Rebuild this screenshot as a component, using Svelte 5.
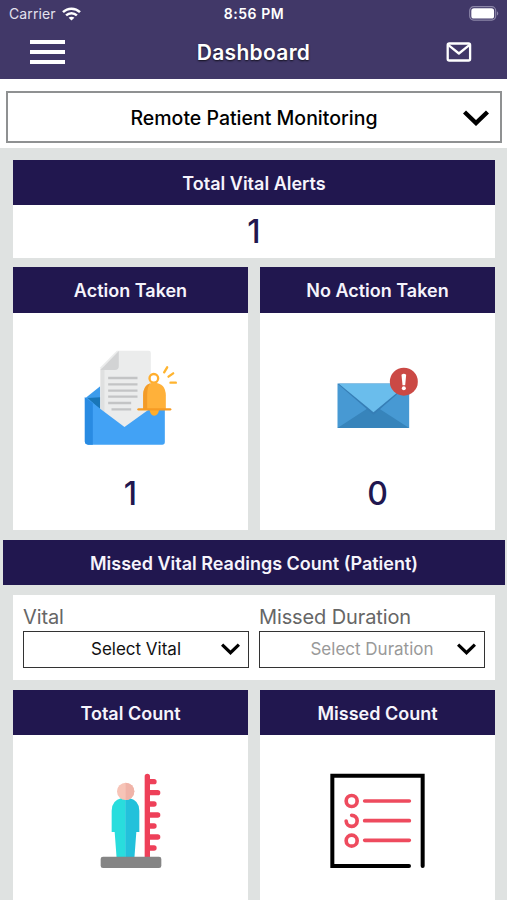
<script lang="ts">
  let program = $state('Remote Patient Monitoring');
  let vital = $state('Select Vital');
  let duration = $state('Select Duration');

  const totals = { alerts: 1, taken: 1, notTaken: 0 };
</script>

{#snippet chevron()}
  <svg class="chevron" viewBox="0 0 26 16" fill="none" stroke="currentColor" stroke-width="4.4">
    <path d="M1.5 2 L13 13 L24.5 2" />
  </svg>
{/snippet}

<div class="app">
  <header class="header">
    <div class="status">
      <div class="status__carrier">
        <span>Carrier</span>
        <svg width="19" height="14" viewBox="0 0 19 14" fill="none" stroke="#fff" stroke-width="2.5">
          <path d="M1 5.2 C5.7 0.6 13.3 0.6 18 5.2" />
          <path d="M4.1 8.4 C7.2 5.5 11.8 5.5 14.9 8.4" />
          <path d="M9.5 13.6 L6.6 10.7 C8.2 9.3 10.8 9.3 12.4 10.7 Z" fill="#fff" stroke="none" />
        </svg>
      </div>
      <span class="status__time">8:56 PM</span>
      <svg class="status__battery" width="30" height="15" viewBox="0 0 30 15">
        <rect x="0.7" y="0.7" width="26" height="13.4" rx="4" fill="none" stroke="#8c86a8" stroke-width="1.2" />
        <rect x="2.3" y="2.3" width="22.8" height="10.2" rx="2.6" fill="#fff" />
        <path d="M28 5.2 C29.7 6 29.7 8.8 28 9.6 Z" fill="#8c86a8" />
      </svg>
    </div>
    <nav class="nav">
      <button class="nav__menu" aria-label="Menu">
        <span></span>
        <span></span>
        <span></span>
      </button>
      <h1 class="nav__title">Dashboard</h1>
      <button class="nav__mail" aria-label="Messages">
        <svg width="26" height="20" viewBox="0 0 26 20" fill="none" stroke="#fff" stroke-width="2.3" stroke-linejoin="round">
          <rect x="1.7" y="1.5" width="22.4" height="17" rx="1.6" />
          <path d="M2.5 3.2 L12.9 11.5 L23.3 3.2" />
        </svg>
      </button>
    </nav>
  </header>

  <div class="program">
    <button class="select select--program">
      <span>{program}</span>
      {@render chevron()}
    </button>
  </div>

  <main class="content">
    <section class="card card--total">
      <h2 class="card__title">Total Vital Alerts</h2>
      <div class="card__total">{totals.alerts}</div>
    </section>

    <div class="row">
      <section class="card card--tall">
        <h2 class="card__title">Action Taken</h2>
        <svg class="card__icon" viewBox="2.5 0 360 360">
          <path d="M45 175 L90 139 V250 H45 Z" fill="#3d9cec" />
          <path d="M52 174 L90 172 V207 Z" fill="#1976b8" />
          <path d="M91 82 L140 32 H236 Q242 32 242 39 V215 L165 264 L91 209 Z" fill="#ebecec" />
          <path d="M91 87 L103 80 V218 L91 209 Z" fill="#dfe0e0" />
          <path d="M91 90 L146 33 V78 Q146 90 134 90 Z" fill="#d2d3d4" />
          <g stroke="#c3c4c5" stroke-width="7">
            <path d="M114 114 H202 M114 133 H202 M114 152 H202 M114 170 H202 M114 189 H183 M124 208 H183" />
          </g>
          <path d="M44 172 L163 261 L284 174 V306 Q284 314 276 314 H54 Q44 314 44 304 Z" fill="#42a2f5" />
          <path d="M44 172 L68 190 V314 H54 Q44 314 44 304 Z" fill="#298be2" />
          <circle cx="251" cy="115" r="13" fill="none" stroke="#ffae2e" stroke-width="7" />
          <path d="M238 206 H267 Q265 227 252 227 Q240 227 238 206 Z" fill="#ffad2b" />
          <path d="M219 207 V166 Q219 129 252 128 Q286 129 287 166 V207 Z" fill="#ffb13a" />
          <path d="M219 207 V166 Q219 137 241 130 Q231 140 231 166 V207 Z" fill="#f29b28" />
          <path d="M205 208 H300" stroke="#f69b24" stroke-width="7" stroke-linecap="round" />
          <path d="M282 97 L291 82 M295 110 L309 100 M301 128 H317" stroke="#ffb42f" stroke-width="7" stroke-linecap="round" />
        </svg>
        <div class="card__count">{totals.taken}</div>
      </section>
      <section class="card card--tall">
        <h2 class="card__title">No Action Taken</h2>
        <svg class="card__icon" viewBox="-5.5 -30 360 360">
          <rect x="53" y="101" width="215" height="133" fill="#4799d3" />
          <path d="M53 234 L145 174 H175 L268 234 Z" fill="#3784bb" />
          <path d="M53 101 H268 L161 194 Z" fill="#367eb6" />
          <path d="M57 101 H264 L161 187 Z" fill="#6abdec" />
          <circle cx="252" cy="95" r="42" fill="#cb4945" />
          <path d="M245 74 Q252 69 259 74 L256 106 H248 Z" fill="#fff" />
          <circle cx="252" cy="115" r="6" fill="#fff" />
        </svg>
        <div class="card__count">{totals.notTaken}</div>
      </section>
    </div>

    <h2 class="banner">Missed Vital Readings Count (Patient)</h2>

    <div class="filters">
      <div class="field">
        <span class="field__label">Vital</span>
        <button class="select">
          <span>{vital}</span>
          {@render chevron()}
        </button>
      </div>
      <div class="field">
        <span class="field__label">Missed Duration</span>
        <button class="select select--empty">
          <span>{duration}</span>
          {@render chevron()}
        </button>
      </div>
    </div>

    <div class="row">
      <section class="card card--count">
        <h2 class="card__title">Total Count</h2>
        <svg class="card__icon" viewBox="-28 0 360 360">
          <path d="M201 49 V296 M201 65 H221 M201 98 H232 M201 132 H221 M201 165 H232 M201 198 H221 M201 231 H232 M201 264 H221" fill="none" stroke="#ee4059" stroke-width="16" stroke-linecap="round" />
          <path d="M136 114 H124 Q94 121 94 152 V216 H103 L109 296 H136 Z" fill="#29dddd" />
          <path d="M135 114 H147 Q177 121 177 152 V216 H168 L162 296 H135 Z" fill="#23c1db" />
          <circle cx="136" cy="94" r="26" fill="#f7c4b7" />
          <path d="M136 68 A26 26 0 0 1 136 120 Z" fill="#f0b3a8" />
          <rect x="61" y="290" width="182" height="34" rx="7" fill="#858585" />
        </svg>
      </section>
      <section class="card card--count">
        <h2 class="card__title">Missed Count</h2>
        <svg class="card__icon" viewBox="24 0 360 360" fill="none" stroke-linecap="round">
          <path d="M297 318 H67 V47 H338 V318" stroke="#000" stroke-width="12" />
          <g stroke="#ee4b5e" stroke-width="11">
            <circle cx="125" cy="123" r="16.5" />
            <path d="M125 166 A16.5 16.5 0 1 1 108.5 183" />
            <circle cx="125" cy="242" r="16.5" />
            <path d="M164 123 H298 M164 182 H298 M164 241 H298" />
          </g>
        </svg>
      </section>
    </div>
  </main>
</div>

<style>
  :global(body) {
    background: #dfe2e1;
  }

  .app {
    height: 900px;
    overflow: hidden;
    font-family: Inter, 'Liberation Sans', sans-serif;
    background: #dfe2e1;
  }

  button {
    padding: 0;
    border: 0;
    background: none;
    font-family: inherit;
  }

  h1,
  h2 {
    margin: 0;
    font-weight: 600;
  }

  /* Header */
  .header {
    height: 79px;
    background: #413868;
    color: #fff;
  }

  .status {
    display: grid;
    grid-template-columns: 1fr auto 1fr;
    align-items: center;
    height: 27px;
    padding: 0 8px 0 9px;
    font-size: 14px;
  }

  .status__carrier {
    display: flex;
    align-items: center;
    gap: 6px;
    color: #e4e1ee;
    font-size: 14px;
    letter-spacing: 0.1px;
  }

  .status__time {
    font-weight: 600;
    letter-spacing: 0.55px;
  }

  .status__battery {
    justify-self: end;
  }

  .nav {
    display: grid;
    grid-template-columns: 1fr auto 1fr;
    align-items: center;
    height: 50px;
    padding: 0 30px;
  }

  .nav__menu {
    display: flex;
    flex-direction: column;
    gap: 6px;
    width: 35px;
  }

  .nav__menu span {
    height: 4px;
    background: #fff;
  }

  .nav__title {
    font-size: 21px;
    letter-spacing: 0.3px;
    text-shadow: 0 1px 2px rgba(0, 0, 0, 0.75);
  }

  .nav__mail {
    display: flex;
    justify-self: end;
    margin-right: 5px;
  }

  /* Selects */
  .program {
    padding: 12px 5px 5px 6px;
    background: #fff;
  }

  .select {
    display: flex;
    align-items: center;
    box-sizing: border-box;
    width: 100%;
    height: 37px;
    padding-right: 8px;
    border: 1.5px solid #333;
    background: #fff;
    color: #111;
    font-size: 17px;
  }

  .select span {
    flex: 1;
    padding-left: 27px;
    text-align: center;
  }

  .select--empty span {
    color: #999;
  }

  .select--program {
    height: 52px;
    padding-right: 11px;
    border: 2px solid #8f9192;
    color: #000;
    font-size: 19.5px;
    font-weight: 500;
  }

  .select--program span {
    padding: 2px 0 0 37px;
  }

  .chevron {
    flex-shrink: 0;
    width: 19px;
    height: 12px;
    color: #000;
  }

  .select--program .chevron {
    width: 26px;
    height: 16px;
    margin-top: 2px;
  }

  /* Cards */
  .content {
    padding: 11.5px 12px 0 13px;
  }

  .card {
    background: #fff;
  }

  .card__title,
  .banner {
    height: 45.5px;
    background: #21174f;
    color: #f6f4fc;
    font-size: 18px;
    line-height: 47px;
    text-align: center;
  }

  .card__total,
  .card__count {
    color: #21174f;
    font-size: 32px;
    font-weight: 500;
    text-align: center;
  }

  .card__total {
    height: 52.5px;
    line-height: 54px;
  }

  .card__icon {
    display: block;
    width: 120px;
    height: 120px;
    margin: 27.5px auto 0;
  }

  .card__count {
    margin-top: 13px;
    line-height: 41px;
  }

  .card--tall {
    height: 262.5px;
  }

  .card--count {
    height: 230px;
  }

  .card--count .card__icon {
    margin-top: 24.5px;
  }

  .row {
    display: grid;
    grid-template-columns: 1fr 1fr;
    gap: 12px;
    margin-top: 9.5px;
  }

  .banner {
    margin: 10px -10px 0;
  }

  /* Filters */
  .filters {
    display: grid;
    grid-template-columns: 1fr 1fr;
    gap: 10px;
    box-sizing: border-box;
    height: 85.5px;
    margin-top: 9.5px;
    padding: 8px 10px 0;
    background: #fff;
  }

  .field__label {
    display: block;
    height: 28px;
    color: #666;
    font-size: 20px;
    letter-spacing: -0.12px;
    line-height: 28px;
  }
</style>
